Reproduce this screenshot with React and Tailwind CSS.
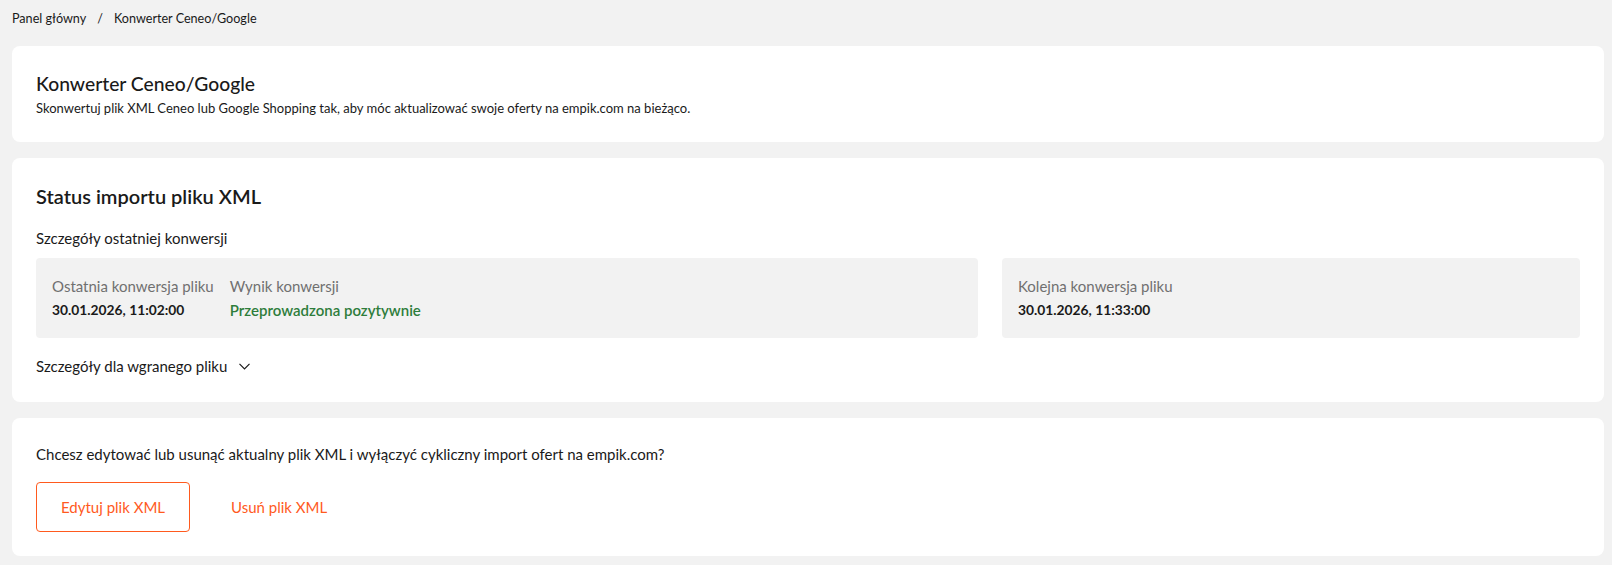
import React from "react";

export default function App() {
  return (
    <div
      className="min-h-[565px] w-full bg-[#f2f2f2] pl-3 pr-2 text-[#1a1a1a]"
      style={{ fontFamily: "Lato, 'Noto Sans', sans-serif" }}
    >
      <nav className="flex h-[37px] items-center gap-2 pt-[1px] text-[12.6px] leading-none">
        <span>Panel główny</span>
        <span className="px-[3px]">/</span>
        <span>Konwerter Ceneo/Google</span>
      </nav>

      <div className="mt-[9px] flex flex-col gap-4 pb-[10px]">
        <section className="rounded-lg bg-white p-6">
          <h1 className="text-[19.3px] font-medium leading-[28px]">Konwerter Ceneo/Google</h1>
          <p className="text-[13px] leading-[20px]">
            Skonwertuj plik XML Ceneo lub Google Shopping tak, aby móc aktualizować swoje oferty na empik.com na bieżąco.
          </p>
        </section>

        <section className="rounded-lg bg-white px-6 pt-6 pb-6">
          <h2 className="text-[20px] font-semibold leading-[28px]">Status importu pliku XML</h2>
          <p className="mt-4 text-[15px] leading-[24px]">Szczegóły ostatniej konwersji</p>
          <div className="mt-2 grid grid-cols-[942px_1fr] gap-6">
            <div className="flex gap-4 rounded bg-[#f2f2f2] p-4">
              <div>
                <div className="text-[15px] leading-[24px] text-[#707070]">Ostatnia konwersja pliku</div>
                <div className="text-[13.8px] font-bold leading-[24px]">30.01.2026, 11:02:00</div>
              </div>
              <div>
                <div className="text-[15px] leading-[24px] text-[#707070]">Wynik konwersji</div>
                <div className="text-[15px] font-semibold leading-[24px] text-[#2e7d3b]">Przeprowadzona pozytywnie</div>
              </div>
            </div>
            <div className="rounded bg-[#f2f2f2] p-4">
              <div className="text-[15px] leading-[24px] text-[#707070]">Kolejna konwersja pliku</div>
              <div className="text-[13.8px] font-bold leading-[24px]">30.01.2026, 11:33:00</div>
            </div>
          </div>
          <button className="mt-4 flex items-center gap-3 text-[15px] leading-[24px]">
            <span>Szczegóły dla wgranego pliku</span>
            <svg width="11" height="7" viewBox="0 0 11 7" fill="none">
              <path d="M0.5 0.8L5.5 5.8L10.5 0.8" stroke="#1a1a1a" strokeWidth="1.2" />
            </svg>
          </button>
        </section>

        <section className="rounded-lg bg-white p-6">
          <p className="text-[15px] leading-[24px]">
            Chcesz edytować lub usunąć aktualny plik XML i wyłączyć cykliczny import ofert na empik.com?
          </p>
          <div className="mt-4 flex gap-4">
            <button className="h-[50px] rounded border border-[#ff5a1e] px-6 text-[15px] text-[#ff5a1e]">
              Edytuj plik XML
            </button>
            <button className="h-[50px] rounded border border-transparent px-6 text-[15px] text-[#ff5a1e]">
              Usuń plik XML
            </button>
          </div>
        </section>
      </div>
    </div>
  );
}
